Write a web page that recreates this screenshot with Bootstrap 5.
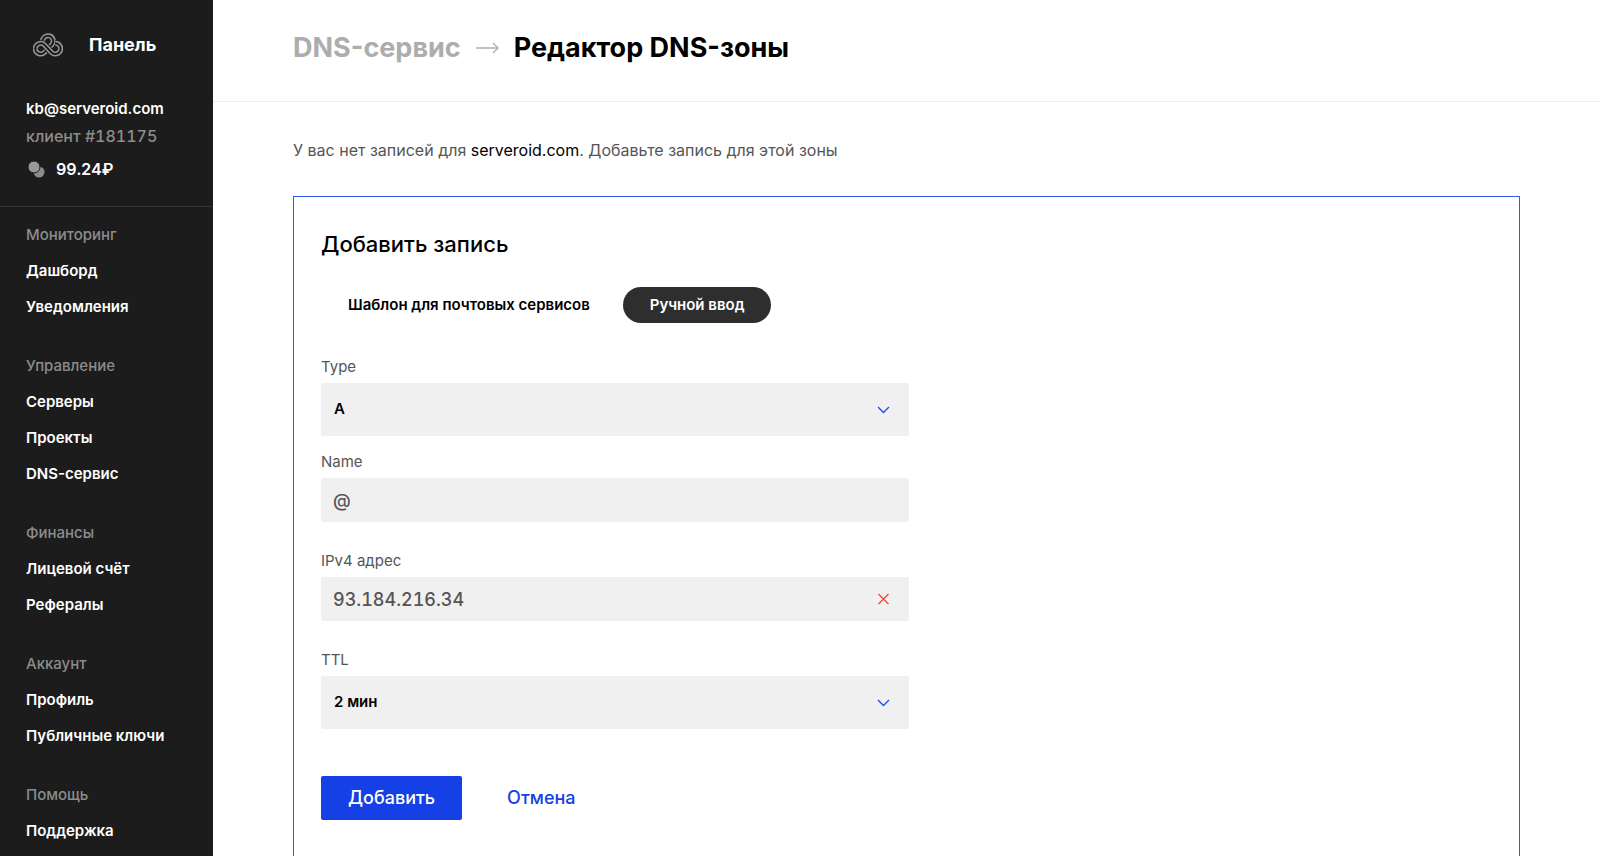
<!DOCTYPE html>
<html lang="ru">
<head>
<meta charset="utf-8">
<meta name="viewport" content="width=device-width, initial-scale=1">
<title>Редактор DNS-зоны</title>
<link href="https://cdn.jsdelivr.net/npm/bootstrap@5.3.0/dist/css/bootstrap.min.css" rel="stylesheet">
<style>
  body { font-family: Inter, "Liberation Sans", sans-serif; font-size: 16px; line-height: 24px; color: #000; }
  a { text-decoration: none; }
  .sidebar { width: 213px; background: #1c1c1c; color: #fff; font-size: 15px; font-weight: 600; }
  .sidebar a { color: #fff; }
  .brand { padding: 33px 26px 0 33px; gap: 26px; font-size: 18px; font-weight: 700; }
  .account { padding: 40px 26px 25px; border-bottom: 1px solid #333; }
  .client, .balance, #ipv4 { font-variant-numeric: tabular-nums; }
  .client { font-size: 16px; line-height: 30px; font-weight: 500; }
  .muted { color: #8c8c8c; }
  .balance { gap: 11px; padding: 6px 0 0 2px; font-size: 16px; }
  .menu { padding: 10px 26px 0; }
  .menu-group { margin-bottom: 23px; line-height: 36px; }
  .menu-title { font-size: 15px; font-weight: 500; line-height: 36px; margin: 0; }
  .page-head { padding: 28px 80px 33px; border-bottom: 1px solid #ededed; gap: 15px; font-size: 27px; line-height: 40px; font-weight: 700; }
  .page-head a { color: #adadad; }
  .page-head h1 { font-size: 27px; line-height: 40px; font-weight: 700; margin: 0; }
  .page-body { padding: 36px 80px 0; }
  .intro { margin-bottom: 34px; color: #555; }
  .intro a { color: #000; }
  .zone-panel { border: 1px solid #2f5bea; border-bottom: 0; padding: 32px 27px 60px; }
  .zone-panel h2 { font-size: 22px; line-height: 30px; font-weight: 500; margin: 0 0 28px; }
  .modes { margin-bottom: 32px; gap: 6px; }
  .mode { border: 0; border-radius: 18px; padding: 6px 27px; background: none; font-size: 15px; font-weight: 600; color: #000; }
  .mode.active { background: #2e2e2e; color: #fff; }
  .record-form { max-width: 588px; }
  .field-label { color: #555; display: block; font-size: 15px; margin-bottom: 4px; }
  .field { display: block; width: 100%; border: 0; border-radius: 2px; background: #f0f0f0; }
  select.field { appearance: none; height: 53px; padding: 0 13px 1px; color: #000; font-size: 15px; font-weight: 600; }
  input.field { height: 44px; padding: 0 12px; font-size: 18px; font-weight: 500; color: #555; }
  .field-box { position: relative; }
  .field-box svg, .clear-btn { position: absolute; right: 18px; top: 50%; transform: translateY(-50%); }
  .field-box > svg { pointer-events: none; }
  .clear-btn { width: 15px; height: 15px; padding: 0; border: 0; background: none; display: flex; align-items: center; justify-content: center; }
  .clear-btn svg { position: static; transform: none; }
  .gap-select { margin-bottom: 14px; }
  .gap-input { margin-bottom: 27px; }
  .actions { margin-top: 47px; gap: 45px; font-size: 18px; font-weight: 500; }
  .submit { border: 0; border-radius: 2px; background: #1440e5; color: #fff; height: 44px; padding: 0 27px; font-weight: 500; }
  .actions a { color: #1440e5; }
</style>
</head>
<body>
<div class="d-flex min-vh-100">
  <aside class="sidebar flex-shrink-0">
    <a href="#" class="brand d-flex align-items-center">
      <svg width="30" height="24" viewBox="0 -1 90 72" fill="none" aria-hidden="true">
        <path d="M29 25A16 16 0 1 1 56.300 34.300L34.300 57.300A16 16 0 0 1 7 46" stroke="#999" stroke-width="15"/>
        <path d="M29 26A16 16 0 1 1 56.300 34.300L34.300 57.300A16 16 0 0 1 7 45" stroke="#1c1c1c" stroke-width="6"/>
        <path d="M7 46A16 16 0 0 1 34.300 34.700L55.700 57.300A16 16 0 1 0 67 30" stroke="#1c1c1c" stroke-width="20"/>
        <path d="M7 46A16 16 0 0 1 34.300 34.700L55.700 57.300A16 16 0 1 0 67 30" stroke="#999" stroke-width="15"/>
        <path d="M7 47A16 16 0 0 1 34.300 34.700L55.700 57.300A16 16 0 1 0 66 30" stroke="#1c1c1c" stroke-width="6"/>
      </svg>
      <span>Панель</span>
    </a>
    <div class="account">
      <div>kb@serveroid.com</div>
      <div class="client muted">клиент #181175</div>
      <div class="balance d-flex align-items-center">
        <svg width="17" height="17" viewBox="0 0 17 17" aria-hidden="true">
          <circle cx="11" cy="11" r="5.5" fill="#8c8c8c"/>
          <circle cx="6" cy="6" r="6" fill="#999" stroke="#1c1c1c" stroke-width="1"/>
        </svg>
        <span>99.24₽</span>
      </div>
    </div>
    <nav class="menu">
      <div class="menu-group">
        <h2 class="menu-title muted">Мониторинг</h2>
        <a class="d-block" href="#">Дашборд</a>
        <a class="d-block" href="#">Уведомления</a>
      </div>
      <div class="menu-group">
        <h2 class="menu-title muted">Управление</h2>
        <a class="d-block" href="#">Серверы</a>
        <a class="d-block" href="#">Проекты</a>
        <a class="d-block" href="#">DNS-сервис</a>
      </div>
      <div class="menu-group">
        <h2 class="menu-title muted">Финансы</h2>
        <a class="d-block" href="#">Лицевой счёт</a>
        <a class="d-block" href="#">Рефералы</a>
      </div>
      <div class="menu-group">
        <h2 class="menu-title muted">Аккаунт</h2>
        <a class="d-block" href="#">Профиль</a>
        <a class="d-block" href="#">Публичные ключи</a>
      </div>
      <div class="menu-group mb-0">
        <h2 class="menu-title muted">Помощь</h2>
        <a class="d-block" href="#">Поддержка</a>
      </div>
    </nav>
  </aside>
  <main class="flex-grow-1">
    <header class="page-head d-flex align-items-center">
      <a href="#">DNS-сервис</a>
      <svg width="23" height="12" viewBox="0 0 23 12" fill="none" stroke="#adadad" stroke-width="1.3" aria-hidden="true"><path d="M0 6H22M17 1L22 6L17 11"/></svg>
      <h1>Редактор DNS-зоны</h1>
    </header>
    <div class="page-body">
      <p class="intro">У вас нет записей для <a href="#">serveroid.com</a>. Добавьте запись для этой зоны</p>
      <section class="zone-panel">
        <h2>Добавить запись</h2>
        <div class="modes d-flex">
          <button type="button" class="mode">Шаблон для почтовых сервисов</button>
          <button type="button" class="mode active">Ручной ввод</button>
        </div>
        <form class="record-form">
          <label class="field-label" for="type">Type</label>
          <div class="field-box gap-select">
            <select class="field" id="type"><option>A</option></select>
            <svg width="15" height="8" viewBox="0 0 15 8" fill="none" stroke="#1f4cf0" stroke-width="1.4" aria-hidden="true"><path d="M2 1L7.500 6.500L13 1"/></svg>
          </div>
          <label class="field-label" for="name">Name</label>
          <input class="field gap-input" id="name" type="text" value="@">
          <label class="field-label" for="ipv4">IPv4 адрес</label>
          <div class="field-box gap-input">
            <input class="field" id="ipv4" type="text" value="93.184.216.34">
            <button class="clear-btn" type="button" aria-label="Очистить"><svg width="13" height="13" viewBox="0 0 13 13" fill="none" stroke="#f04a42" stroke-width="1.4"><path d="M1.500 1.500L11.500 11.500M11.500 1.500L1.500 11.500"/></svg></button>
          </div>
          <label class="field-label" for="ttl">TTL</label>
          <div class="field-box">
            <select class="field" id="ttl"><option>2 мин</option></select>
            <svg width="15" height="8" viewBox="0 0 15 8" fill="none" stroke="#1f4cf0" stroke-width="1.4" aria-hidden="true"><path d="M2 1L7.500 6.500L13 1"/></svg>
          </div>
          <div class="actions d-flex align-items-center">
            <button class="submit" type="submit">Добавить</button>
            <a href="#">Отмена</a>
          </div>
        </form>
      </section>
    </div>
  </main>
</div>
<script src="https://cdn.jsdelivr.net/npm/bootstrap@5.3.0/dist/js/bootstrap.bundle.min.js"></script>
</body>
</html>
